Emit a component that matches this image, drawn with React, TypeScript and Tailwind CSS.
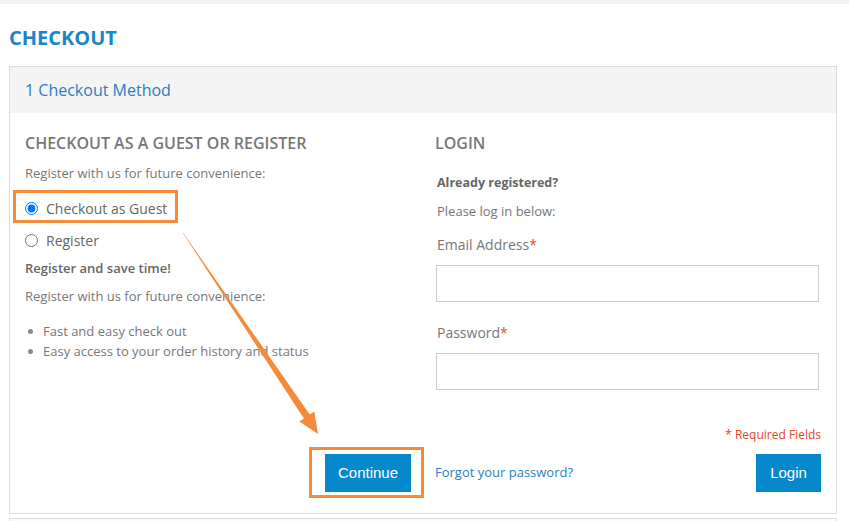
import React from "react";

export default function App() {
  return (
    <div className="relative w-[849px] h-[521px] overflow-hidden bg-white text-[#777]" style={{ fontFamily: '"Open Sans", sans-serif' }}>
      <div className="h-[4px] bg-[#f2f2f2]" />
      <div className="px-[9px] pt-[20px]">
        <h1 className="text-[20px] font-bold leading-[28px] text-[#1a85c8]">CHECKOUT</h1>
        <div className="mt-[14px] w-[828px] border border-[#ddd]">
          <div className="h-[46px] bg-[#f4f4f4] px-[15px] flex items-center text-[16px] text-[#2a7fc0]">1 Checkout Method</div>
          <div className="flex gap-[24px] pl-[15px] pr-[14px] pt-[19px] pb-[21px]">
            {/* Left column */}
            <div className="w-[386px] flex flex-col">
              <h2 className="text-[16px] font-semibold leading-[22px] text-[#777]">CHECKOUT AS A GUEST OR REGISTER</h2>
              <p className="mt-[9px] text-[13px] leading-[20px]">Register with us for future convenience:</p>
              <div className="mt-[7px] -ml-[12px] w-[165px] h-[33px] border-[3px] border-[#f38b3b] flex items-center pl-[9px] pt-[3px] gap-[8px]">
                <input type="radio" defaultChecked name="m" className="w-[13px] h-[13px] m-0" />
                <span className="text-[14px] text-[#666]">Checkout as Guest</span>
              </div>
              <label className="mt-[6px] flex items-center gap-[8px] h-[22px]">
                <input type="radio" name="m" className="w-[13px] h-[13px] m-0" />
                <span className="text-[14px] text-[#666]">Register</span>
              </label>
              <p className="mt-[7px] text-[13px] font-semibold leading-[20px] text-[#666]">Register and save time!</p>
              <p className="mt-[8px] text-[13px] leading-[20px]">Register with us for future convenience:</p>
              <ul className="mt-[15px] text-[13px] leading-[20px]">
                <li className="flex items-center gap-[10px] pl-[3px]"><span className="w-[5px] h-[5px] rounded-full bg-[#888]" />Fast and easy check out</li>
                <li className="flex items-center gap-[10px] pl-[3px]"><span className="w-[5px] h-[5px] rounded-full bg-[#888]" />Easy access to your order history and status</li>
              </ul>
              <div className="mt-auto flex justify-end">
                <div className="-mr-[13px] -mb-[6px] border-[3px] border-[#f38b3b] pl-[13px] pr-[10px] pt-[4px] pb-[3px]">
                  <button className="block w-[86px] h-[38px] bg-[#0688cc] text-white text-[15px]" style={{ fontFamily: '"Liberation Sans", Arial, sans-serif' }}>Continue</button>
                </div>
              </div>
            </div>
            {/* Right column */}
            <div className="w-[386px] flex flex-col">
              <h2 className="text-[16px] font-semibold leading-[22px] text-[#777]">LOGIN</h2>
              <p className="mt-[19px] pl-[2px] text-[12.5px] font-bold leading-[20px] text-[#666]">Already registered?</p>
              <p className="mt-[8px] pl-[2px] text-[13px] leading-[20px]">Please log in below:</p>
              <p className="mt-[14px] pl-[2px] text-[14px] leading-[20px] text-[#777]">Email Address<span className="text-[#e0542a]">*</span></p>
              <input className="mt-[10px] ml-[1px] w-[383px] h-[37px] border border-[#ccc] outline-none" />
              <p className="mt-[21px] pl-[2px] text-[14px] leading-[20px] text-[#777]">Password<span className="text-[#e0542a]">*</span></p>
              <input type="password" className="mt-[10px] ml-[1px] w-[383px] h-[37px] border border-[#ccc] outline-none" />
              <p className="mt-[36px] text-right text-[12px] leading-[18px] text-[#e8442a]">* Required Fields</p>
              <div className="mt-[10px] flex items-center justify-between">
                <a className="text-[13px] text-[#2a7fc0]">Forgot your password?</a>
                <button className="w-[65px] h-[38px] bg-[#0688cc] text-white text-[15px]" style={{ fontFamily: '"Liberation Sans", Arial, sans-serif' }}>Login</button>
              </div>
            </div>
          </div>
        </div>
        <div className="mt-[4px] w-[828px] h-[20px] border border-[#ddd] bg-[#fafafa]" />
      </div>
      <svg className="absolute left-0 top-0 pointer-events-none" width="849" height="521">
        <polygon
          fill="#f38b3b"
          points="182.6,232.7 183.4,233.3 309.7,414.4 314.3,411.4 318,434 299.3,421.4 303.9,418.4"
        />
      </svg>
    </div>
  );
}
